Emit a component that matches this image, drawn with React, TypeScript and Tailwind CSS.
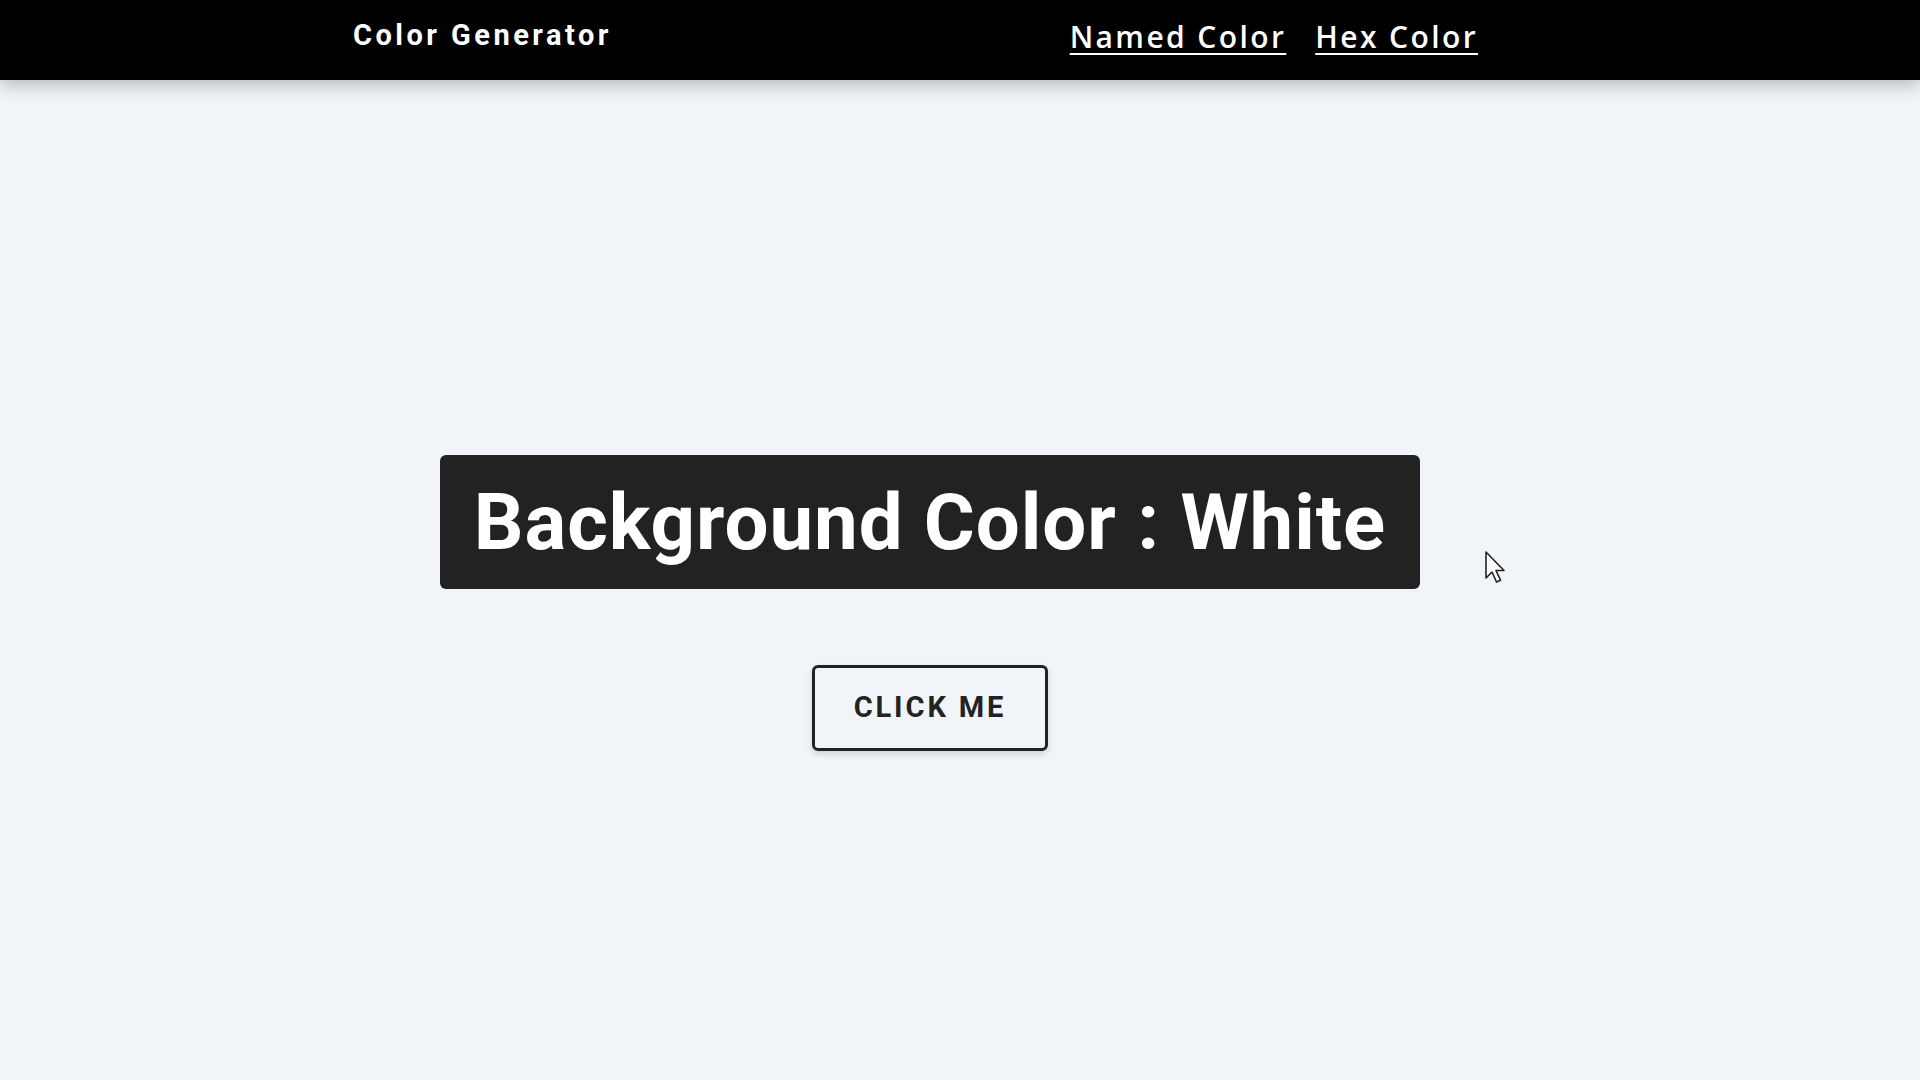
const Cursor = () => (
  <svg width="26" height="36" viewBox="0 0 26 36" className="absolute left-[1484px] top-[550px]">
    <path d="M2 2 L2 28 L8 22 L12.5 32 L16.5 30.2 L12 20.5 L20 20.5 Z" fill="#ffffff" stroke="#222222" strokeWidth="1.6" strokeLinejoin="round" />
  </svg>
)

const App = () => {
  return (
    <div className="relative min-h-screen w-full bg-[#f1f5f9] font-['Roboto',sans-serif]">
      <nav className="relative z-10 h-[80px] bg-black shadow-[0_4px_18px_rgba(0,0,0,0.28)]">
        <div className="flex h-full items-center justify-between pb-[8px] pl-[353px] pr-[442px]">
          <h1 className="font-['Roboto',sans-serif] text-[29px] font-bold tracking-[0.12em] text-white">
            Color Generator
          </h1>
          <div className="flex items-center gap-[29px] font-['Open_Sans',sans-serif] text-[30px] font-semibold tracking-[0.08em] text-white">
            <a href="#" className="underline decoration-2 underline-offset-[5px]">Named Color</a>
            <a href="#" className="underline decoration-2 underline-offset-[5px]">Hex Color</a>
          </div>
        </div>
      </nav>

      <main className="flex w-[1860px] flex-col items-center pt-[375px]">
        <div className="flex h-[134px] w-[980px] items-center justify-center rounded-md bg-[#222222]">
          <h2 className="text-[78px] font-bold tracking-[0.012em] text-white">Background Color : White</h2>
        </div>
        <button className="mt-[76px] flex h-[86px] w-[236px] items-center justify-center rounded-md border-[3px] border-[#222222] bg-transparent text-[29px] font-bold tracking-[0.1em] text-[#222222] shadow-[0_3px_6px_rgba(0,0,0,0.15)]">
          CLICK ME
        </button>
      </main>

      <Cursor />
    </div>
  )
}

export default App
